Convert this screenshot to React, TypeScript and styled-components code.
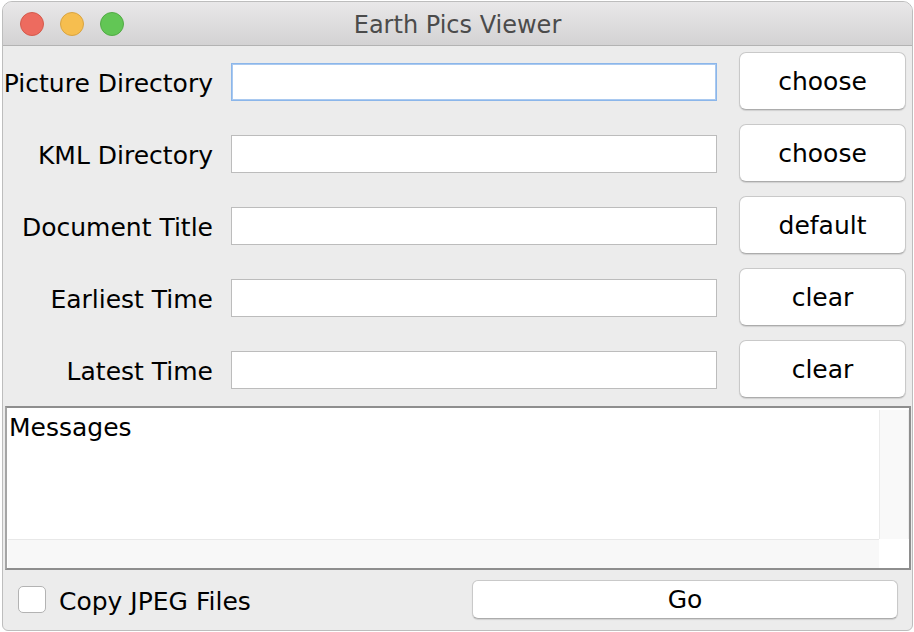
import React from "react";
import styled, { createGlobalStyle } from "styled-components";

const Global = createGlobalStyle`
  html, body { margin: 0; padding: 0; background: #ffffff; }
  body { width: 914px; height: 632px; overflow: hidden; }
  * { box-sizing: border-box; }
`;

const FONT = `"DejaVu Sans", "Liberation Sans", sans-serif`;

const Page = styled.div`
  padding: 1px 2px 0 2px;
`;

const Window = styled.div`
  width: 911px;
  height: 630px;
  border: 1px solid #bdbdbd;
  border-radius: 10px 10px 6px 6px;
  overflow: hidden;
  background: #ececec;
  display: flex;
  flex-direction: column;
  font-family: ${FONT};
  color: #000;
`;

const TitleBar = styled.div`
  height: 44px;
  flex: none;
  position: relative;
  display: flex;
  align-items: center;
  justify-content: center;
  background: linear-gradient(#e9e8e9, #d3d2d3);
  border-bottom: 1px solid #b3b3b3;
`;

const Lights = styled.div`
  position: absolute;
  left: 17px;
  top: 10px;
  display: flex;
  gap: 16px;
`;

const Light = styled.span<{ $fill: string; $edge: string }>`
  width: 24px;
  height: 24px;
  border-radius: 50%;
  background: ${(p) => p.$fill};
  border: 1px solid ${(p) => p.$edge};
`;

const Title = styled.div`
  font-size: 24px;
  color: #4b4b4b;
  padding-top: 2px;
`;

const Form = styled.div`
  display: grid;
  grid-template-columns: 210px 486px 171px;
  grid-auto-rows: 58px;
  column-gap: 18px;
  row-gap: 14px;
  padding-top: 6px;
  align-items: center;
`;

const Label = styled.label`
  justify-self: end;
  font-size: 25px;
  white-space: nowrap;
  padding-top: 4px;
`;

const Field = styled.input<{ $focused?: boolean }>`
  height: 38px;
  width: 486px;
  margin-top: 2px;
  border: 1px solid ${(p) => (p.$focused ? "#8bb6ea" : "#bcbcbc")};
  box-shadow: ${(p) => (p.$focused ? "0 0 0 1px #a9c9f0 inset" : "none")};
  background: #fff;
  outline: none;
  font-family: ${FONT};
  font-size: 22px;
`;

const Button = styled.button<{ $h?: number }>`
  justify-self: end;
  width: 167px;
  height: ${(p) => p.$h ?? 58}px;
  border-radius: 7px;
  border: 1px solid #c9c9c9;
  border-bottom-color: #acacac;
  background: #ffffff;
  box-shadow: 0 1px 1px rgba(0, 0, 0, 0.12);
  font-family: ${FONT};
  font-size: 25px;
  color: #000;
  padding: 0;
`;

const Messages = styled.div`
  margin: 8px 1px 0 2px;
  height: 164px;
  border: 2px solid #8e8e8e;
  border-left-color: #a5a5a5;
  display: grid;
  grid-template-columns: 1fr 30px;
  grid-template-rows: 1fr 29px;
  background: #fff;
`;

const TextArea = styled.div`
  font-size: 25px;
  padding: 5px 0 0 2px;
  background: #fff;
`;

const VScroll = styled.div`
  margin-top: 2px;
  background: #f9f9f9;
  border-left: 1px solid #ebebeb;
  border-right: 1px solid #ededed;
`;

const HScroll = styled.div`
  margin-left: 1px;
  background: #f8f8f8;
  border-top: 1px solid #e8e8e8;
`;

const Corner = styled.div`
  background: #fff;
`;

const Footer = styled.div`
  flex: 1;
  display: flex;
  align-items: center;
  justify-content: space-between;
  padding: 0 14px 4px 15px;
`;

const CheckRow = styled.label`
  display: flex;
  align-items: center;
  gap: 13px;
  font-size: 25px;
  padding-top: 7px;
`;

const Box = styled.span`
  width: 28px;
  height: 27px;
  margin-top: -4px;
  border-radius: 5px;
  border: 1px solid #b3b3b3;
  background: #fff;
`;

const GoButton = styled(Button)`
  width: 426px;
  height: 39px;
  border-radius: 6px;
  margin-top: 2px;
`;

const rows: { label: string; action: string; focused?: boolean }[] = [
  { label: "Picture Directory", action: "choose", focused: true },
  { label: "KML Directory", action: "choose" },
  { label: "Document Title", action: "default" },
  { label: "Earliest Time", action: "clear" },
  { label: "Latest Time", action: "clear" },
];

export default function App() {
  return (
    <Page>
      <Global />
      <Window>
        <TitleBar>
          <Lights>
            <Light $fill="#ed6b5f" $edge="#d45a4c" />
            <Light $fill="#f6be4f" $edge="#d9a441" />
            <Light $fill="#62c655" $edge="#52ab45" />
          </Lights>
          <Title>Earth Pics Viewer</Title>
        </TitleBar>
        <Form>
          {rows.map((r) => (
            <React.Fragment key={r.label}>
              <Label>{r.label}</Label>
              <Field $focused={r.focused} />
              <Button>{r.action}</Button>
            </React.Fragment>
          ))}
        </Form>
        <Messages>
          <TextArea>Messages</TextArea>
          <VScroll />
          <HScroll />
          <Corner />
        </Messages>
        <Footer>
          <CheckRow>
            <Box />
            Copy JPEG Files
          </CheckRow>
          <GoButton>Go</GoButton>
        </Footer>
      </Window>
    </Page>
  );
}
